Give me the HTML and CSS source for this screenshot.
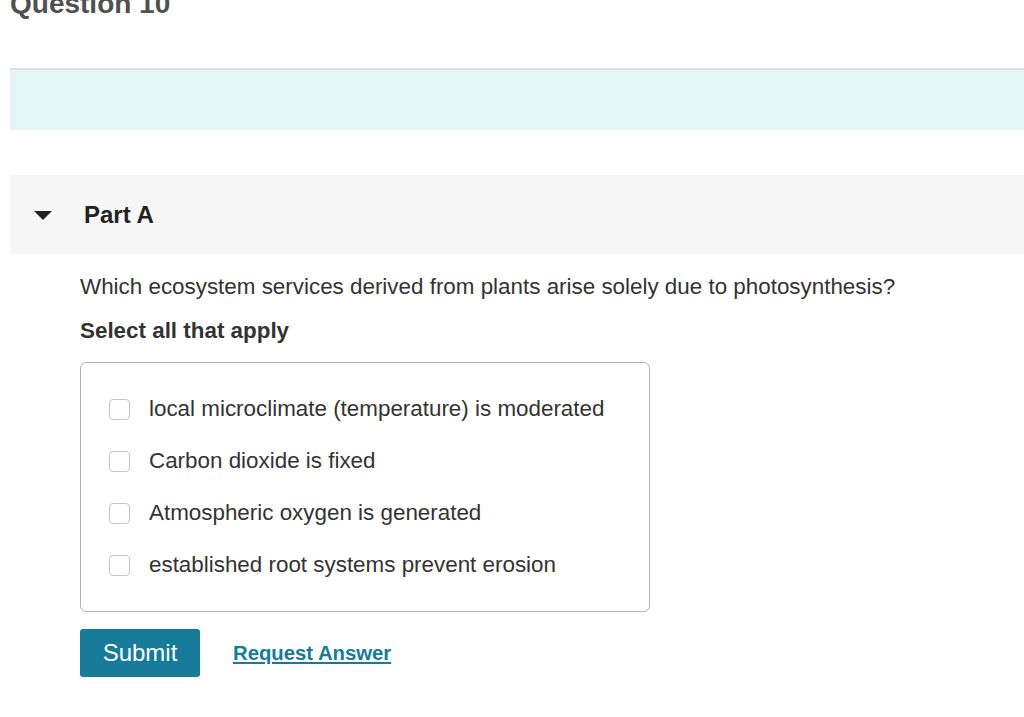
FILE: index.html
```html
<!DOCTYPE html>
<html>
<head>
<meta charset="utf-8">
<link rel="stylesheet" href="styles.css">
</head>
<body>
<div class="page">
  <h1 class="q-title">Question 10</h1>
  <div class="intro-band"></div>
  <div class="part-header">
    <span class="caret"></span>
    <h2 class="part-title">Part A</h2>
  </div>
  <div class="part-body">
    <p class="prompt">Which ecosystem services derived from plants arise solely due to photosynthesis?</p>
    <p class="instruction">Select all that apply</p>
    <div class="choices">
      <label class="choice"><span class="box"></span><span class="choice-text">local microclimate (temperature) is moderated</span></label>
      <label class="choice"><span class="box"></span><span class="choice-text">Carbon dioxide is fixed</span></label>
      <label class="choice"><span class="box"></span><span class="choice-text">Atmospheric oxygen is generated</span></label>
      <label class="choice"><span class="box"></span><span class="choice-text">established root systems prevent erosion</span></label>
    </div>
    <div class="actions">
      <button class="submit">Submit</button>
      <a class="request" href="#">Request Answer</a>
    </div>
  </div>
</div>
</body>
</html>
```
FILE: styles.css
```css
html, body {
  margin: 0;
  padding: 0;
  background: #fff;
}
body {
  font-family: "Liberation Sans", Arial, sans-serif;
  color: #333;
  overflow: hidden;
}
.page {
  padding-left: 10px;
}
.q-title {
  margin: -12px 0 0 0;
  font-size: 28px;
  line-height: 32px;
  font-weight: bold;
  color: #505050;
}
.intro-band {
  margin-top: 48px;
  height: 60px;
  border-top: 2px solid #dedede;
  background: #e6f5f6;
}
.part-header {
  margin-top: 45px;
  height: 79px;
  background: #f7f7f7;
  display: flex;
  align-items: center;
}
.caret {
  width: 0;
  height: 0;
  margin-left: 24px;
  border-left: 9px solid transparent;
  border-right: 9px solid transparent;
  border-top: 9px solid #222;
  margin-top: 1px;
}
.part-title {
  margin: 0 0 0 32px;
  font-size: 24px;
  font-weight: bold;
  color: #222;
}
.part-body {
  padding-left: 70px;
}
.prompt {
  margin: 20px 0 0 0;
  font-size: 22.4px;
  line-height: 26px;
}
.instruction {
  margin: 18px 0 0 0;
  font-size: 22.4px;
  line-height: 26px;
  font-weight: bold;
}
.choices {
  margin-top: 18px;
  width: 570px;
  height: 250px;
  border: 1px solid #b3b3b3;
  border-radius: 6px;
  box-sizing: border-box;
  padding-top: 24px;
  display: flex;
  flex-direction: column;
  gap: 8px;
}
.choice {
  display: flex;
  align-items: center;
  height: 44px;
}
.box {
  width: 21px;
  height: 21px;
  margin-left: 28px;
  border: 1px solid #c4c4c4;
  border-radius: 4px;
  box-sizing: border-box;
  background: #fff;
}
.choice-text {
  margin-left: 19px;
  font-size: 22.4px;
  color: #333;
}
.actions {
  margin-top: 17px;
  display: flex;
  align-items: center;
}
.submit {
  width: 120px;
  height: 48px;
  border: none;
  border-radius: 3px;
  background: #157b99;
  color: #fff;
  font-family: "Liberation Sans", Arial, sans-serif;
  font-size: 24px;
  padding: 0;
}
.request {
  margin-left: 33px;
  font-size: 20.3px;
  font-weight: bold;
  color: #157b99;
  text-decoration: underline;
}
```
